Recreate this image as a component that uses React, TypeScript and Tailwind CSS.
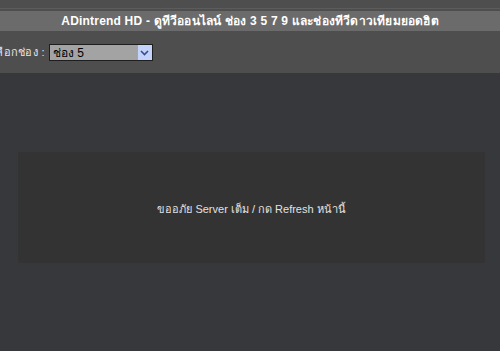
import React from "react";

const App = () => {
  return (
    <div
      className="w-[500px] h-[351px] overflow-hidden bg-[#37383c] text-white"
      style={{ fontFamily: '"Liberation Sans", "Noto Sans", Tahoma, sans-serif' }}
    >
      <div className="bg-[#4e4e4e]">
        <div className="h-[9px] border-b border-[#5c5c5c]" />
        <div className="h-[2px]" />
        <div className="h-[20px] bg-[#6b6b6b] flex items-center justify-center text-[12px] font-bold tracking-[0.2px] text-white">
          ADintrend HD - ดูทีวีออนไลน์ ช่อง 3 5 7 9 และช่องทีวีดาวเทียมยอดฮิต
        </div>
        <div className="h-[42px] flex items-center -ml-[8px] pt-[1px]">
          <span className="text-[11px] text-[#e6e6e6] mr-[4px] tracking-[0.3px]">เลือกช่อง :</span>
          <div className="w-[104px] h-[17px] border border-[#1e1e1e] bg-[#a3a3a3] flex items-center">
            <span className="flex-1 pl-[3px] text-[12px] text-black leading-none">ช่อง 5</span>
            <span className="w-[15px] h-[15px] bg-[#c3d3fb] border-l border-[#8fa6dd] flex items-center justify-center">
              <svg width="9" height="6" viewBox="0 0 9 6">
                <path d="M1 1 L4.5 4.5 L8 1" fill="none" stroke="#3b4d82" strokeWidth="1.6" />
              </svg>
            </span>
          </div>
        </div>
      </div>
      <div className="px-[18px] pt-[79px]">
        <div className="w-[467px] h-[111px] bg-[#333333] flex items-center justify-center pt-[4px] text-[11px] text-[#e2e2e2]">
          ขออภัย Server เต็ม / กด Refresh หน้านี้
        </div>
      </div>
    </div>
  );
};

export default App;
